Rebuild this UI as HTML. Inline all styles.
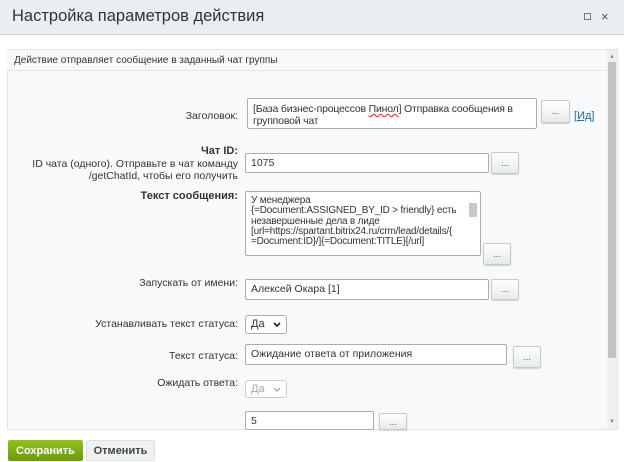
<!DOCTYPE html>
<html><head><meta charset="utf-8"><style>
*{box-sizing:border-box;margin:0;padding:0}
body{width:624px;height:461px;overflow:hidden;background:#fff;font-family:"Liberation Sans",Arial,sans-serif;color:#333;position:relative}
.a{position:absolute}
.hdr{left:0;top:0;width:624px;height:35px;background:#e9eef0;border-bottom:1px solid #c9cfd2}
.title{left:12px;top:7px;font-size:16.5px;color:#333}
.panel{left:7px;top:49px;width:611px;height:381px;background:#f8f9fa;border:1px solid #dfe3e5}
.desc{left:7px;top:50px;width:600px;height:21px;border-bottom:1px solid #e3e7e9;font-size:10px;padding:5px 7px;color:#333;background:#f8f9fa}
.lbl{font-size:10.5px;color:#333;text-align:right;right:386px;white-space:nowrap;line-height:12px}
.b{font-weight:bold}
.in{background:#fff;border:1px solid #a8adb0;border-radius:2px;font-size:10.5px;color:#333;padding:3px 5px;line-height:12px;overflow:hidden;white-space:nowrap}
.ta{white-space:normal}
.btn{background:linear-gradient(#fff,#e6eaec);border:1px solid #c5cacd;border-radius:2px;font-size:9px;color:#555;text-align:center;line-height:16px;box-shadow:0 1px 1px rgba(0,0,0,.15)}
.sel{background:#fff;border:1px solid #a8adb0;border-radius:3px;font-size:11px;padding:3px 5px;line-height:11px}
.sel svg{position:absolute;right:5px;top:6px}
</style></head><body>
<div class="a hdr"></div>
<div class="a title">Настройка параметров действия</div>
<div class="a" style="left:584px;top:13px;width:7px;height:7px;border:1px solid #777"></div>
<div class="a" style="left:601px;top:9px;font-size:13px;color:#555">×</div>

<div class="a panel"></div>
<div class="a desc">Действие отправляет сообщение в заданный чат группы</div>
<div class="a" style="left:607px;top:50px;width:10px;height:379px;background:#f0f0f0"></div>
<div class="a" style="left:608px;top:62px;width:8px;height:296px;background:#c2c2c2"></div>
<div class="a" style="left:609px;top:54px;font-size:6px;color:#888">▲</div>
<div class="a" style="left:609px;top:419px;font-size:6px;color:#888">▼</div>

<div class="a lbl" style="top:110px">Заголовок:</div>
<div class="a in ta" style="left:247px;top:98px;width:290px;height:31px;padding-top:4px;letter-spacing:-0.2px">[База бизнес-процессов <span style="text-decoration:underline wavy #d33">Пинол</span>] Отправка сообщения в групповой чат</div>
<div class="a btn" style="left:541px;top:100px;width:29px;height:23px;line-height:20px">...</div>
<div class="a" style="left:574px;top:110px;font-size:11px;color:#2067b0">[<u>Ид</u>]</div>

<div class="a lbl b" style="top:145px;font-size:11px">Чат ID:</div>
<div class="a lbl" style="top:158px">ID чата (одного). Отправьте в чат команду</div>
<div class="a lbl" style="top:170px">/getChatId, чтобы его получить</div>
<div class="a in" style="left:245px;top:153px;width:244px;height:20px">1075</div>
<div class="a btn" style="left:491px;top:152px;width:28px;height:22px;line-height:20px">...</div>

<div class="a lbl b" style="top:190px;font-size:11px">Текст сообщения:</div>
<div class="a in" style="left:245px;top:191px;width:236px;height:65px;padding:4px 14px 0 5px;font-size:10px;line-height:10.3px;letter-spacing:-0.2px">У менеджера<br>{=Document:ASSIGNED_BY_ID &gt; friendly} есть<br>незавершенные дела в лиде<br>[url=https://spartant.bitrix24.ru/crm/lead/details/{<br>=Document:ID}/]{=Document:TITLE}[/url]</div>
<div class="a" style="left:469px;top:203px;width:8px;height:14px;background:#c8c8c8"></div>
<div class="a btn" style="left:483px;top:243px;width:28px;height:22px;line-height:20px">...</div>

<div class="a lbl" style="top:277px">Запускать от имени:</div>
<div class="a in" style="left:245px;top:279px;width:244px;height:21px">Алексей Окара [1]</div>
<div class="a btn" style="left:491px;top:279px;width:28px;height:21px;line-height:19px">...</div>

<div class="a lbl" style="top:318px">Устанавливать текст статуса:</div>
<div class="a sel" style="left:245px;top:315px;width:42px;height:19px">Да <svg width="8" height="6" viewBox="0 0 8 6"><path d="M1 1l3 3 3-3" stroke="#222" stroke-width="1.6" fill="none"/></svg></div>

<div class="a lbl" style="top:350px">Текст статуса:</div>
<div class="a in" style="left:245px;top:344px;width:262px;height:21px">Ожидание ответа от приложения</div>
<div class="a btn" style="left:513px;top:346px;width:28px;height:22px;line-height:20px">...</div>

<div class="a lbl" style="top:377px">Ожидать ответа:</div>
<div class="a sel" style="left:245px;top:380px;width:42px;height:18px;color:#aaa;border-color:#ccc">Да <svg width="8" height="6" viewBox="0 0 8 6"><path d="M1 1l3 3 3-3" stroke="#aaa" stroke-width="1.4" fill="none"/></svg></div>

<div class="a in" style="left:245px;top:411px;width:129px;height:19px">5</div>
<div class="a btn" style="left:379px;top:413px;width:28px;height:17px">...</div>

<div class="a" style="left:8px;top:440px;width:75px;height:21px;background:linear-gradient(#8fc21c,#6b9a0f);border-radius:2px;color:#fff;font-size:11px;font-weight:bold;text-align:center;line-height:22px">Сохранить</div>
<div class="a" style="left:86px;top:440px;width:69px;height:21px;background:#eef1f2;border:1px solid #dde1e3;border-radius:2px;color:#444;font-size:11px;font-weight:bold;text-align:center;line-height:20px">Отменить</div>
</body></html>
